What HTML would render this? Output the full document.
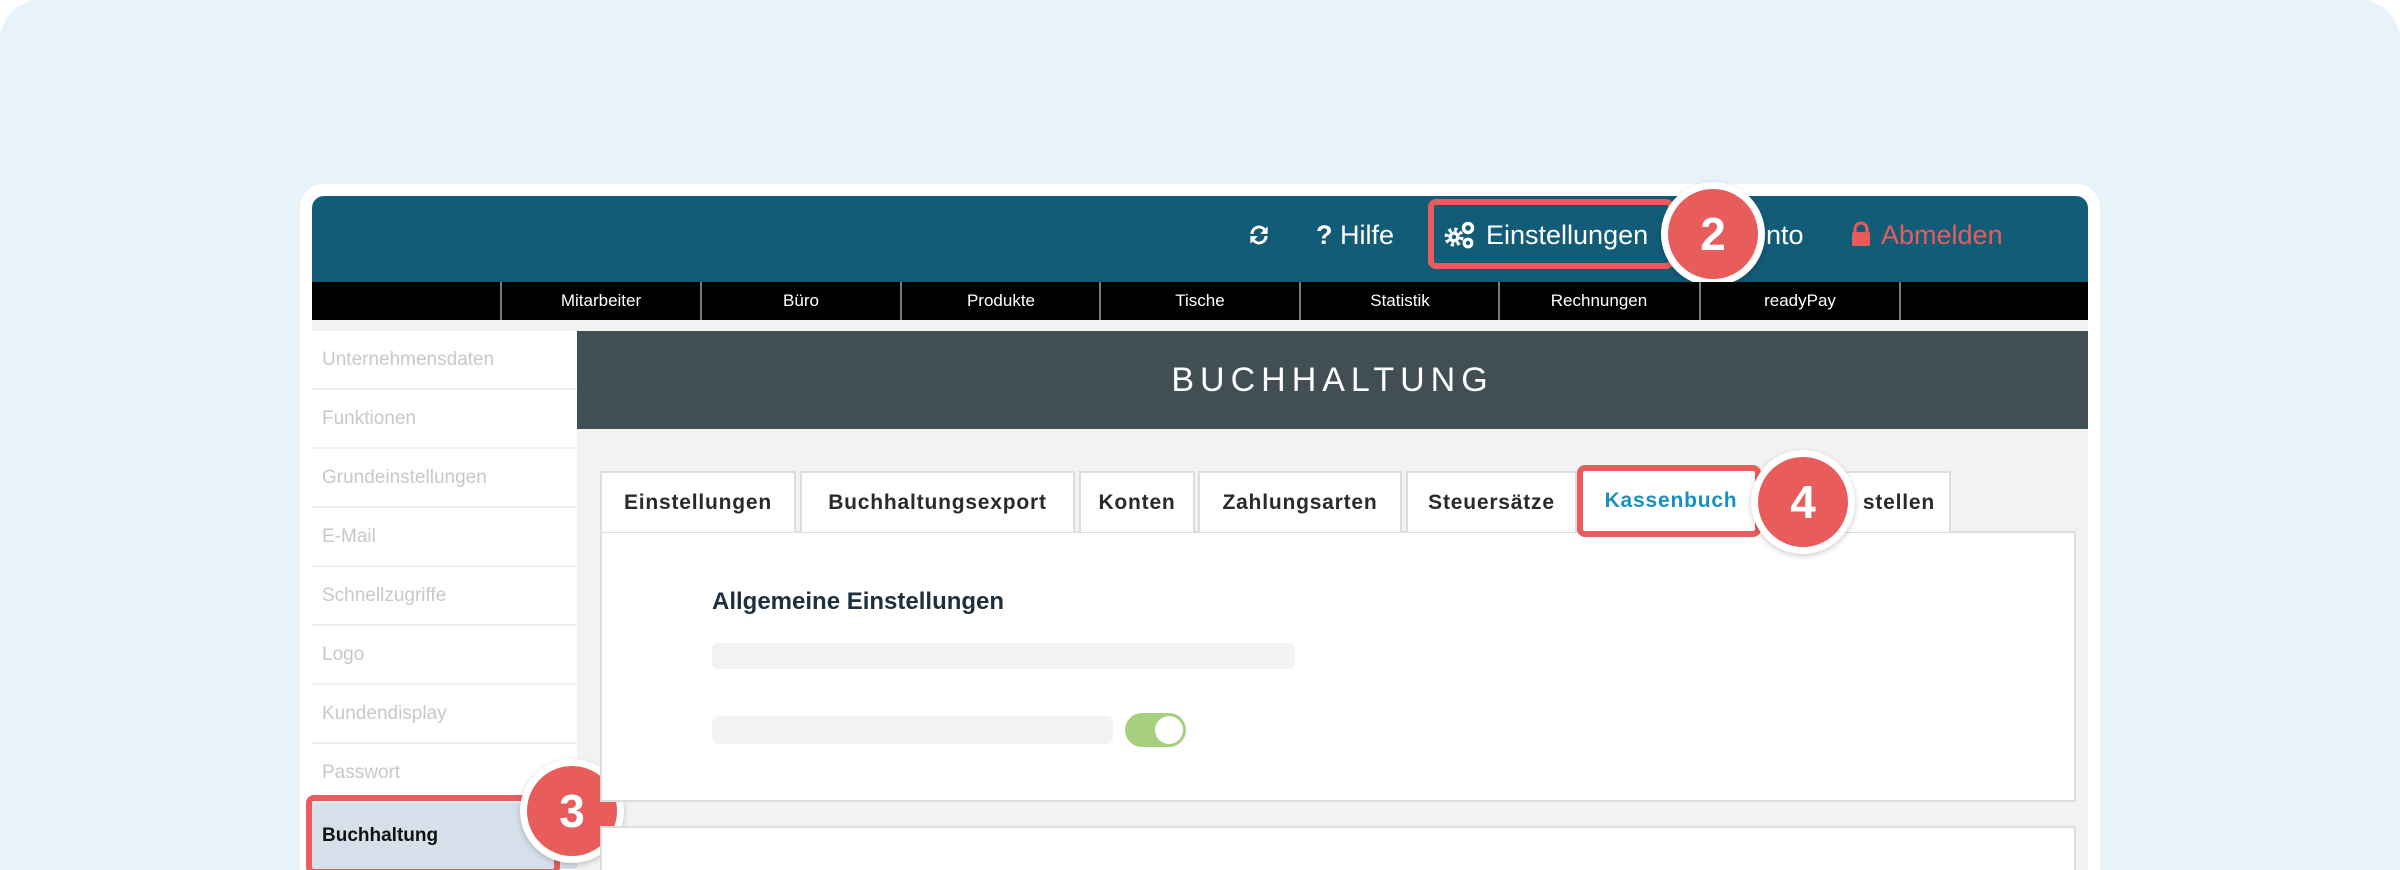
<!DOCTYPE html>
<html style="overflow:hidden;height:870px"><head><meta charset="utf-8"><style>
*{margin:0;padding:0;box-sizing:border-box}
body{width:2400px;height:870px;background:#fff;overflow:hidden;font-family:"Liberation Sans","DejaVu Sans",sans-serif;position:relative}
.bg{position:absolute;left:0;top:0;width:2400px;height:870px;background:#e8f3f9;border-radius:40px 40px 0 0}
.frame{position:absolute;left:300px;top:184px;width:1800px;height:686px;background:#fff;border-radius:24px 24px 0 0}
.hdr{position:absolute;left:312px;top:196px;width:1776px;height:86px;background:#135c78;border-radius:12px 12px 0 0}
.ht{position:absolute;top:218px;font-size:27px;color:#fff;line-height:34px;white-space:nowrap}
.nav{position:absolute;left:312px;top:282px;width:1776px;height:38px;background:#000}
.nav div{position:absolute;top:0;width:200px;height:38px;border-left:2px solid #777;color:#fff;font-size:17px;text-align:center;line-height:38px}
.strip{position:absolute;left:312px;top:320px;width:1776px;height:11px;background:#f2f2f2}
.side{position:absolute;left:312px;top:331px;width:265px}
.side div{height:59px;border-bottom:2px solid #f0f0f0;color:#c8c8c8;font-size:19px;line-height:57px;padding-left:10px}
.main{position:absolute;left:577px;top:331px;width:1511px;height:540px;background:#f2f2f2}
.title{position:absolute;left:577px;top:331px;width:1511px;height:98px;background:#414f55;color:#fff;font-size:34px;letter-spacing:6px;text-align:center;line-height:98px}
.tab{position:absolute;top:471px;height:61px;background:#fff;border:2px solid #ddd;border-bottom:none;font-size:21px;font-weight:bold;color:#2a2a2a;letter-spacing:0.8px;line-height:60px;text-align:center}
.panel{position:absolute;left:600px;top:531px;width:1476px;height:271px;background:#fff;border:2px solid #ddd}
.panel2{position:absolute;left:600px;top:826px;width:1476px;height:60px;background:#fff;border:2px solid #ddd}
.red{position:absolute;border:6px solid #e85c5c;border-radius:8px}
.badge{position:absolute;width:104px;height:104px;border-radius:50%;background:#e85c5c;border:7px solid #fff;color:#fff;font-weight:bold;font-size:46px;text-align:center;line-height:90px;box-shadow:0 2px 6px rgba(0,0,0,.2)}
</style></head><body>
<div class="bg"></div>
<div class="frame"></div>
<div class="hdr"></div>
<svg style="position:absolute;left:1246px;top:222px" width="26" height="26" viewBox="0 0 24 24"><path d="M4 11a8 8 0 0 1 14-5l2-2v7h-7l3-3a5 5 0 0 0-9 3z M20 13a8 8 0 0 1-14 5l-2 2v-7h7l-3 3a5 5 0 0 0 9-3z" fill="#fff"/></svg>
<div class="ht" style="left:1316px"><b>?</b> Hilfe</div>
<svg style="position:absolute;left:1443px;top:220px" width="34" height="30" viewBox="0 0 34 30"><circle cx="11" cy="17" r="7.5" fill="none" stroke="#fff" stroke-width="4" stroke-dasharray="3 2.9"/><circle cx="11" cy="17" r="5.5" fill="#fff"/><circle cx="11" cy="17" r="2.2" fill="#135c78"/><circle cx="25" cy="8" r="4.5" fill="none" stroke="#fff" stroke-width="3.5"/><circle cx="25" cy="23" r="3.8" fill="none" stroke="#fff" stroke-width="3.2"/></svg>
<div class="ht" style="left:1486px">Einstellungen</div>
<div class="ht" style="left:1766px">nto</div>
<svg style="position:absolute;left:1851px;top:221px" width="20" height="26" viewBox="0 0 20 26"><path d="M4 12V8a6 6 0 0 1 12 0v4" fill="none" stroke="#e85c5c" stroke-width="3"/><rect x="1" y="11" width="18" height="14" rx="2" fill="#e85c5c"/></svg>
<div class="ht" style="left:1881px;color:#e85c5c">Abmelden</div>
<div class="red" style="left:1428px;top:199px;width:246px;height:70px"></div>
<div class="badge" style="left:1661px;top:182px">2</div>
<div class="nav">
<div style="left:188px">Mitarbeiter</div><div style="left:388px">Büro</div><div style="left:588px">Produkte</div><div style="left:787px">Tische</div><div style="left:987px">Statistik</div><div style="left:1186px">Rechnungen</div><div style="left:1387px">readyPay</div><div style="left:1587px;width:2px"></div>
</div>
<div class="strip"></div>
<div class="main"></div>
<div class="side">
<div>Unternehmensdaten</div><div>Funktionen</div><div>Grundeinstellungen</div><div>E-Mail</div><div>Schnellzugriffe</div><div>Logo</div><div>Kundendisplay</div><div>Passwort</div>
<div style="background:#d6e0ea;color:#111;font-weight:bold;height:66px;line-height:66px;border:none">Buchhaltung</div>
</div>
<div class="red" style="left:306px;top:795px;width:254px;height:80px"></div>
<div class="badge" style="left:520px;top:759px">3</div>
<div class="title">BUCHHALTUNG</div>
<div class="panel"></div>
<div class="panel2"></div>
<div class="tab" style="left:600px;width:196px">Einstellungen</div>
<div class="tab" style="left:800px;width:275px">Buchhaltungsexport</div>
<div class="tab" style="left:1079px;width:116px">Konten</div>
<div class="tab" style="left:1198px;width:204px">Zahlungsarten</div>
<div class="tab" style="left:1406px;width:171px">Steuersätze</div>
<div class="tab" style="left:1581px;width:370px;text-align:right;padding-right:14px">stellen</div>
<div class="tab" style="left:1581px;width:180px;color:#1a8fc4;border:none">Kassenbuch</div>
<div class="red" style="left:1577px;top:465px;width:184px;height:72px"></div>
<div class="badge" style="left:1751px;top:450px">4</div>
<div style="position:absolute;left:712px;top:588px;font-size:24px;color:#1e3040;font-weight:bold">Allgemeine Einstellungen</div>
<div style="position:absolute;left:712px;top:643px;width:583px;height:26px;background:#f3f3f3;border-radius:6px"></div>
<div style="position:absolute;left:712px;top:716px;width:401px;height:28px;background:#f3f3f3;border-radius:6px"></div>
<div style="position:absolute;left:1125px;top:713px;width:61px;height:34px;background:#a6d07f;border-radius:17px"><div style="position:absolute;right:3px;top:3px;width:28px;height:28px;border-radius:50%;background:#fff"></div></div>
</body></html>
